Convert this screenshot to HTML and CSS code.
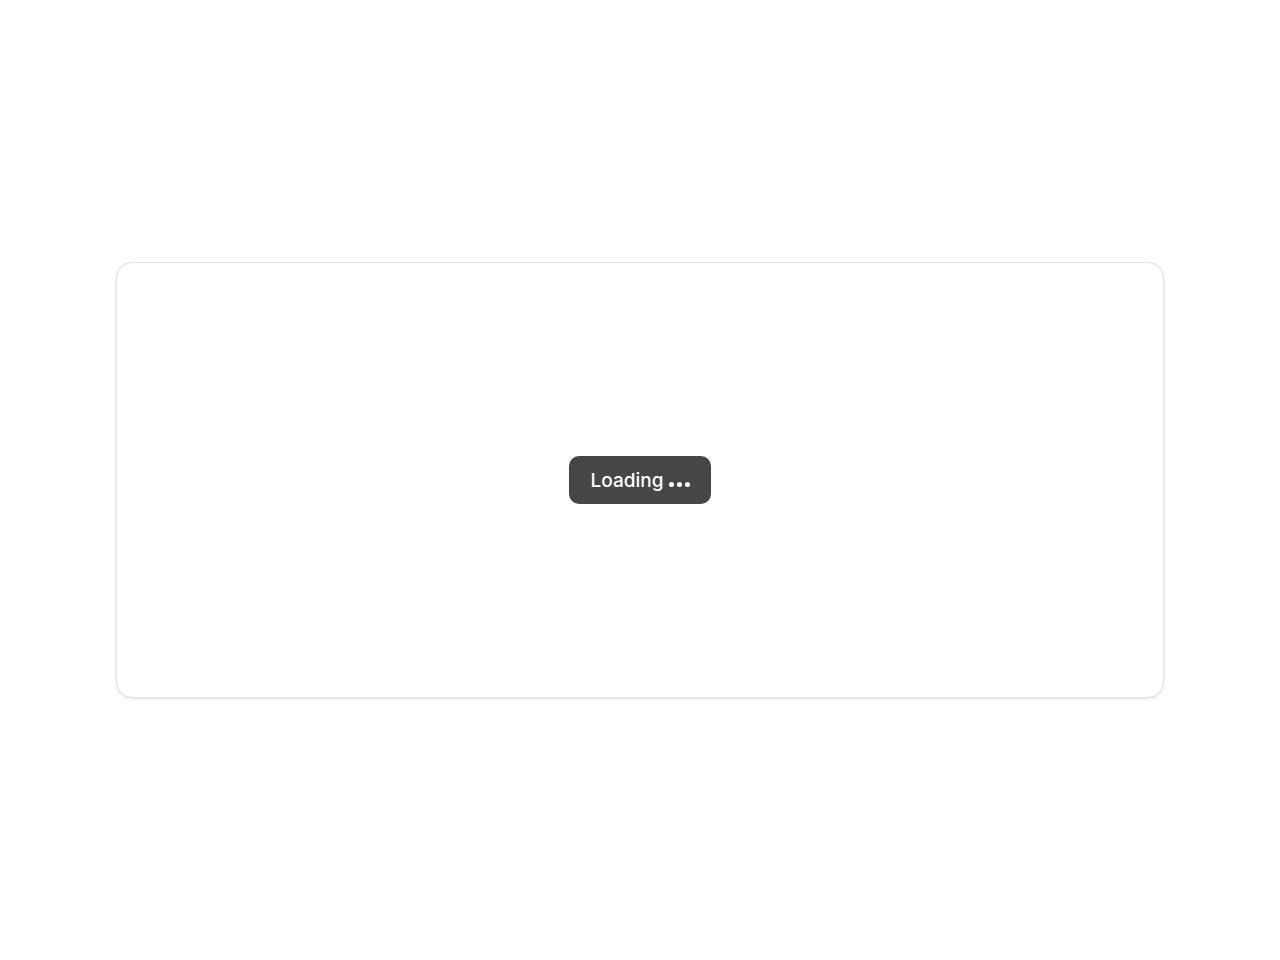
FILE: index.html
```html
<!DOCTYPE html>
<html>
<head>
<meta charset="utf-8">
<link rel="stylesheet" href="styles.css">
</head>
<body>
<div class="page">
  <div class="card">
    <div class="loading">
      <span class="label">Loading</span>
      <span class="dots"><i></i><i></i><i></i></span>
    </div>
  </div>
</div>
</body>
</html>
```
FILE: styles.css
```css
html, body {
  margin: 0;
  padding: 0;
  background: #ffffff;
  font-family: Inter, "Liberation Sans", Arial, sans-serif;
}
.page {
  height: 960px;
  display: flex;
  align-items: center;
  justify-content: center;
}
.card {
  width: 1046px;
  height: 434px;
  border: 1px solid #e2e2e2;
  border-radius: 16px;
  box-shadow: 0 1px 3px rgba(0, 0, 0, 0.12);
  background: #fff;
  display: flex;
  align-items: center;
  justify-content: center;
}
.loading {
  height: 48px;
  padding: 0 21px 0 22px;
  box-sizing: border-box;
  background: #464646;
  border-radius: 10px;
  display: flex;
  align-items: center;
  gap: 6px;
  color: #fff;
}
.label {
  font-size: 19px;
  font-weight: 500;
  line-height: 24px;
  margin-top: 1px;
}
.dots {
  display: flex;
  gap: 3px;
  margin-top: 9px;
}
.dots i {
  width: 5px;
  height: 5px;
  border-radius: 50%;
  background: #fff;
  display: block;
}
```
